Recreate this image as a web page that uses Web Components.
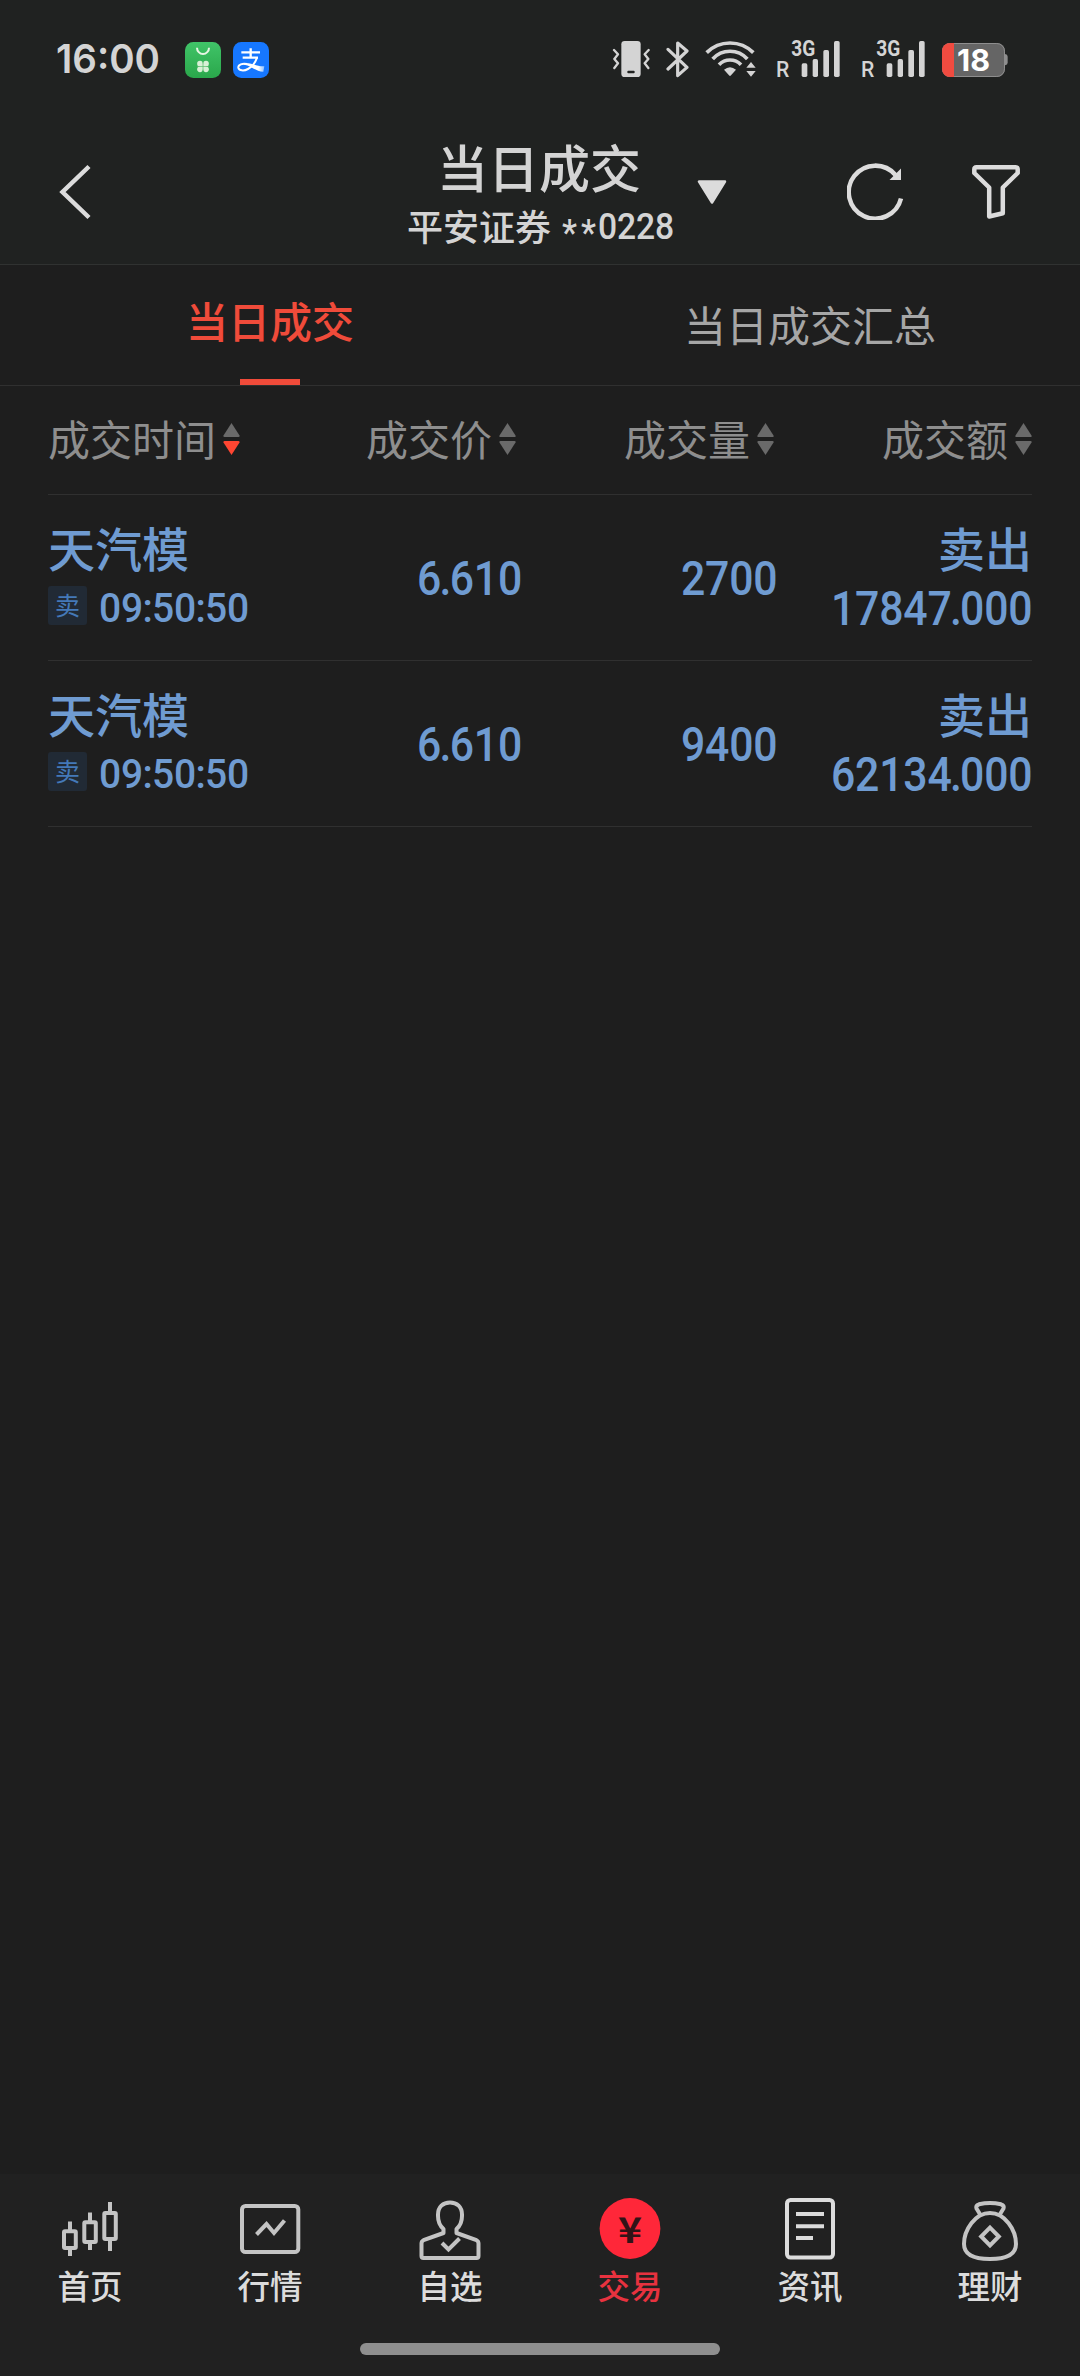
<!DOCTYPE html>
<html lang="zh-CN">
<head>
<meta charset="utf-8">
<title>当日成交</title>
<style>
  html, body { margin: 0; background: #1e1e1e; }
  body { font-family: "Noto Sans CJK SC", sans-serif; color: #d4d4d4; }
</style>
</head>
<body>
<trade-app></trade-app>
<script>
function define(name, html, setup) {
  const tpl = document.createElement('template');
  tpl.innerHTML = html;
  customElements.define(name, class extends HTMLElement {
    connectedCallback() {
      if (this.shadowRoot) return;
      const root = this.attachShadow({ mode: 'open' });
      root.appendChild(tpl.content.cloneNode(true));
      if (setup) setup(this, root);
    }
  });
}

/* Condensed numerals on a fixed pitch; the baseline is the bottom edge.
   pitch: advance of a digit, point: advance of "." and ":". */
define('num-text', `
  <style>
    :host { display: block; font-family: Roboto, sans-serif; font-weight: 500; }
    svg { display: block; overflow: visible; }
  </style>
  <svg><text fill="currentColor"></text></svg>`,
  (el, root) => {
    const value = el.getAttribute('value');
    if (value === null) return;
    const num = k => parseFloat(el.getAttribute(k));
    const size = num('size'), h = num('h'), pitch = num('pitch'), point = num('point');
    const scale = pitch / (0.564 * size);
    const natural = { '.': 0.274, ':': 0.258, '*': 0.443 };
    const xs = [], dys = [];
    let x = 0, lift = 0;
    for (const ch of value) {
      const adv = ch === '.' || ch === ':' ? point : pitch;
      const glyph = (natural[ch] || 0.564) * size * scale;
      xs.push(((x + (adv - glyph) / 2) / scale).toFixed(2));
      const want = ch === '*' ? 5.5 : 0;
      dys.push(want - lift); lift = want;
      x += adv;
    }
    const svg = root.querySelector('svg'), t = root.querySelector('text');
    svg.setAttribute('width', x.toFixed(1)); svg.setAttribute('height', h);
    t.setAttribute('transform', `translate(0 ${h}) scale(${scale.toFixed(4)} 1)`);
    t.setAttribute('x', xs.join(' '));
    t.setAttribute('dy', dys.join(' '));
    t.setAttribute('font-size', size);
    t.textContent = value;
  });

define('signal-icon', `
  <style>:host{display:block} svg{display:block;overflow:visible}</style>
  <svg width="65" height="39" viewBox="558 60 195 117" fill="#d4d4d4">
    <text x="558" y="171" font-family="Roboto" font-weight="500" font-size="64" textLength="40" lengthAdjust="spacingAndGlyphs">R</text>
    <text x="604" y="108" font-family="Roboto" font-weight="700" font-size="65" textLength="72" lengthAdjust="spacingAndGlyphs">3G</text>
    <rect x="635" y="130" width="17" height="41" rx="5"/><rect x="668" y="117" width="16" height="54" rx="5"/>
    <rect x="700" y="90" width="17" height="81" rx="5"/><rect x="732" y="63" width="17" height="108" rx="5"/>
  </svg>`);

define('status-bar', `
  <style>
    :host { display: block; height: 120px; }
    .bar { display: flex; height: 39px; padding: 40px 71px 0 56px; }
    .apps { display: flex; gap: 12px; padding: 2px 0 0 25px; flex: 1; }
    svg { display: block; }
    .clock { padding-top: 3px; overflow: visible; }
    .i2 { margin-left: 16px } .i3 { margin-left: 15px } .i4 { margin-left: 19px } .i5 { margin-left: 20px }
  </style>
  <div class="bar">
    <svg class="clock" width="104" height="30"><text y="29.500" font-family="Inter" font-weight="600" font-size="40" fill="#d4d4d4" textLength="104" lengthAdjust="spacingAndGlyphs">16:00</text></svg>
    <div class="apps">
      <svg width="36" height="36" viewBox="555 66 108 108">
        <defs><linearGradient id="g" x2="0" y2="1"><stop stop-color="#40c468"/><stop offset="1" stop-color="#2aa74b"/></linearGradient></defs>
        <rect x="555" y="66" width="108" height="108" rx="25" fill="url(#g)"/>
        <path d="M591 83a18 19 0 0 0 36 0" fill="none" stroke="#e6f6e4" stroke-width="6"/>
        <g fill="#d9f0d6"><circle cx="600" cy="131" r="8.5"/><circle cx="618" cy="131" r="8.5"/><circle cx="600" cy="148" r="8.5"/><circle cx="618" cy="148" r="8.5"/><rect x="600" y="131" width="18" height="17"/></g>
        <path d="M609 122v35M591 139.500h36" stroke="#53b868" stroke-width="2"/>
      </svg>
      <svg width="36" height="36" viewBox="699 66 108 108">
        <defs><linearGradient id="b"><stop offset=".7" stop-color="#fff"/><stop offset="1" stop-color="#8fc0ff"/></linearGradient></defs>
        <rect x="699" y="66" width="108" height="108" rx="25" fill="#1677ff"/>
        <g fill="none" stroke="#fff" stroke-width="7">
          <path d="M724 97h56M728 113h46M752 85v28"/>
          <path d="M771 113c-5 15-14 27-27 34c-13 7-27 5-29-4c-1-9 12-14 26-11" stroke-width="6"/>
        </g>
        <path d="M732 129c24-2 35 11 61 10l-3 16c-24 0-34-18-58-21z" fill="url(#b)"/>
      </svg>
    </div>
    <svg width="38" height="39" viewBox="66 60 114 117">
      <rect x="94" y="63" width="58" height="108" rx="10" fill="#d4d4d4"/><rect x="112" y="152" width="22" height="8" rx="3" fill="#202221"/>
      <path d="M72 90l12 13-11 14 11 13-11 14M176 90l-12 13 11 14-11 13 11 14" fill="none" stroke="#d4d4d4" stroke-width="7" stroke-linejoin="round" stroke-linecap="round"/>
    </svg>
    <svg class="i2" width="24" height="39" viewBox="228 60 72 117">
      <path d="M234 88L291 142L263 167V69L291 93L234 147" fill="none" stroke="#d4d4d4" stroke-width="9.500" stroke-linejoin="round" stroke-linecap="round"/>
    </svg>
    <svg class="i3" width="52" height="39" viewBox="345 60 156 117">
      <g fill="none" stroke="#d4d4d4" stroke-width="11"><path d="M350 98A99 99 0 0 1 490 98"/><path d="M368 117A70 70 0 0 1 472 117"/><path d="M387 134A46 46 0 0 1 453 134"/></g>
      <path d="M402 149Q420 134 438 149L423 166Q420 170 417 166ZM483 126L497 143H469ZM469 153H497L483 170Z" fill="#d4d4d4"/>
    </svg>
    <signal-icon class="i4"></signal-icon>
    <signal-icon class="i5"></signal-icon>
    <svg class="i3" width="68" height="39" viewBox="1053 60 204 117">
      <defs><clipPath id="c"><rect x="1056" y="69" width="189" height="102" rx="24"/></clipPath></defs>
      <rect x="1056" y="69" width="189" height="102" rx="24" fill="#656565"/>
      <rect x="1057.500" y="70.500" width="186" height="99" rx="23" fill="none" stroke="#8e8e8e" stroke-width="3"/>
      <rect x="1056" y="69" width="36" height="102" fill="#f04b40" clip-path="url(#c)"/>
      <path d="M1245 102q8 1 8 8v18q0 7-8 8z" fill="#8e8e8e"/>
      <text x="1101" y="154" font-family="Inter" font-weight="700" font-size="90" fill="#fff" textLength="99" lengthAdjust="spacingAndGlyphs">18</text>
    </svg>
  </div>`);

define('title-bar', `
  <style>
    :host { display: block; height: 144px; border-bottom: 1px solid #303231; }
    .bar { display: flex; }
    svg { display: block; }
    .back { margin: 42px 314px 0 57px; }
    .titles { width: 267px; padding-top: 16px; }
    .title { font-size: 51px; line-height: 60px; font-weight: 500; text-align: center; margin-right: 3px; white-space: nowrap; }
    .sub { display: flex; gap: 9px; font-size: 36px; line-height: 36px; margin-top: 11px; white-space: nowrap; }
    .sub num-text { padding-top: 6px; }
    .sub span { font-weight: 500; }
    .drop { margin: 60px 0 0 23px; }
    .refresh { margin: 40px 0 0 120px; }
    .filter { margin: 42px 0 0 64px; }
  </style>
  <div class="bar">
    <svg class="back" width="36" height="60" viewBox="57 162 36 60"><path d="M89 166.500L62.500 192L89 217.500" fill="none" stroke="#dcdcdc" stroke-width="4.500"/></svg>
    <div class="titles">
      <div class="title">当日成交</div>
      <div class="sub"><span>平安证券</span><num-text value="**0228" pitch="19" point="8" h="26" size="36.500"></num-text></div>
    </div>
    <svg class="drop" width="30" height="24"><path d="M2 1.500H28L15 22.500Z" fill="#dcdcdc" stroke="#dcdcdc" stroke-width="2.500" stroke-linejoin="round"/></svg>
    <svg class="refresh" width="60" height="60" viewBox="847 160 60 60">
      <path d="M901 198.500A26.500 26.500 0 1 1 895.500 175" fill="none" stroke="#dcdcdc" stroke-width="4.500"/>
      <path d="M901 168.500V180H889.500Z" fill="#dcdcdc"/>
    </svg>
    <svg class="filter" width="50" height="60" viewBox="971 162 50 60">
      <path d="M976.500 167.200H1015.500Q1017.700 167.200 1017.700 169.500V173L1002.800 187.500V213.300L989.200 216.500V187.500L974.300 173V169.500Q974.300 167.200 976.500 167.200Z" fill="none" stroke="#dcdcdc" stroke-width="4.500" stroke-linejoin="round"/>
    </svg>
  </div>`);

define('tab-bar', `
  <style>
    :host { display: flex; height: 120px; border-bottom: 1px solid #303030; font-size: 42px; text-align: center; }
    div { flex: 1; display: flex; flex-direction: column; align-items: center; color: #a6a6a6; line-height: 117px; }
    .on { color: #f04b3a; font-weight: 500; line-height: 110px; justify-content: space-between; }
    .on span { height: 110px; }
    i { width: 60px; height: 6px; background: #f04b3a; }
  </style>
  <div class="on"><span>当日成交</span><i></i></div>
  <div><span>当日成交汇总</span></div>`);

define('sort-label', `
  <style>
    :host { display: flex; align-items: center; justify-content: flex-end; gap: 7px; height: 107px; font-size: 42px; color: #8e8e8e; }
    :host([start]) { justify-content: flex-start; }
    span { line-height: 104px; padding-bottom: 3px; white-space: nowrap; }
    svg { display: block; padding-bottom: 1px; }
    .down { fill: #6a6a6a; } :host([desc]) .down { fill: #ff4632; }
  </style>
  <span><slot></slot></span>
  <svg width="17" height="32"><path d="M8.500 0L16.500 12.500Q17 14 15.500 14H1.500Q0 14 .5 12.500Z" fill="#6a6a6a"/><path class="down" d="M8.500 32L16.500 19.500Q17 18 15.500 18H1.500Q0 18 .5 19.500Z"/></svg>`);

define('list-header', `
  <style>
    :host { display: grid; grid-template-columns: 210px repeat(3, 258px); height: 108px; margin: 0 48px; border-bottom: 1px solid #303030; }
  </style>
  <sort-label start desc>成交时间</sort-label><sort-label>成交价</sort-label><sort-label>成交量</sort-label><sort-label>成交额</sort-label>`);

define('trade-row', `
  <style>
    :host { display: grid; grid-template-columns: 216px 258px 255px 255px; height: 165px; margin: 0 48px; border-bottom: 1px solid #303030; color: #6f9bd1; }
    .name { font-size: 47px; line-height: 56px; font-weight: 500; white-space: nowrap; }
    .end, .mid { display: flex; flex-direction: column; align-items: flex-end; }
    .cell { padding-top: 24px; }
    .mid { padding-top: 66px; }
    .meta { display: flex; gap: 12px; margin-top: 11px; }
    .badge { width: 39px; height: 39px; border-radius: 3px; background: #212a35; color: #4479b8; font-size: 25px; line-height: 36px; text-align: center; }
    .meta num-text { padding-top: 6px; }
    .end num-text { padding-top: 15px; }
  </style>
  <div class="cell"><div class="name" id="name"></div><div class="meta"><span class="badge">卖</span><num-text id="time" pitch="22" point="9" h="29.500" size="41"></num-text></div></div>
  <div class="mid"><num-text id="price" pitch="24.100" point="8.600" h="34" size="47.500"></num-text></div>
  <div class="mid"><num-text id="qty" pitch="24.100" point="8.600" h="34" size="47.500"></num-text></div>
  <div class="cell end"><div class="name">卖出</div><num-text id="sum" pitch="24.100" point="8.600" h="34.500" size="47.500"></num-text></div>`,
  (el, root) => {
    root.getElementById('name').textContent = el.getAttribute('name');
    for (const k of ['time', 'price', 'qty', 'sum']) {
      const old = root.getElementById(k), f = document.createElement('num-text');
      for (const a of old.attributes) f.setAttribute(a.name, a.value);
      f.setAttribute('value', el.getAttribute(k));
      old.replaceWith(f);
    }
  });

define('nav-item', `
  <style>
    :host { flex: 1; display: flex; flex-direction: column; align-items: center; gap: 3px; padding-top: 22px; }
    span { font-size: 32.500px; line-height: 36px; font-weight: 500; color: #dcdcdc; }
    :host([active]) span { color: #e8323f; }
  </style>
  <slot></slot><span></span>`,
  (el, root) => { root.querySelector('span').textContent = el.getAttribute('label'); });

define('bottom-nav', `
  <style>
    :host { display: flex; flex-direction: column; height: 202px; background: #212121; }
    nav { display: flex; height: 169px; }
    svg { display: block; fill: none; stroke: #c4c4c4; stroke-width: 4; }
    .home { width: 360px; height: 12px; border-radius: 6px; background: #8f8f8f; align-self: center; }
  </style>
  <nav>
    <nav-item label="首页"><svg width="68" height="68"><rect x="8" y="35.300" width="11.800" height="16.700" rx="1"/><rect x="28.300" y="26.300" width="11.500" height="19.700" rx="1"/><rect x="48.300" y="17" width="11.500" height="26" rx="1"/><path d="M14 25.500V34M14 53V60M34 16.500V25M34 47V54M54 6V16M54 44V55"/></svg></nav-item>
    <nav-item label="行情"><svg width="68" height="68"><rect x="6" y="10" width="56.300" height="46" rx="3.500"/><path d="M20.500 38.500L30.500 28L38 37L48.500 24.500"/></svg></nav-item>
    <nav-item label="自选"><svg width="68" height="68"><path stroke-linejoin="round" d="M27.500 37V33C23.500 29.500 22 25.500 22 20V18.500C22 11 27 6.500 34 6.500S46 11 46 18.500V20C46 25.500 44.500 29.500 40.500 33V37L60.500 44.200Q62.500 45.200 62.500 47.500V60Q62.500 62 60.500 62H7.500Q5.500 62 5.500 60V47.500Q5.500 45.200 7.500 44.200L27.500 37Z"/><path d="M26 47L32.500 53.500L43.500 42.500"/></svg></nav-item>
    <nav-item label="交易" active><svg width="68" height="68"><circle cx="34" cy="32.500" r="30.400" fill="#ff2739" stroke="none"/><text x="22" y="46.500" font-family="Noto Sans CJK SC" font-weight="700" font-size="35" textLength="24" lengthAdjust="spacingAndGlyphs" fill="#321317" stroke="none">¥</text></svg></nav-item>
    <nav-item label="资讯"><svg width="68" height="68" style="stroke:#dcdcdc"><rect x="11" y="4" width="46" height="57.500" rx="3.500"/><path d="M20 18H48M20 30.300H48M20 42H37"/></svg></nav-item>
    <nav-item label="理财"><svg width="68" height="68"><path d="M34 17C19 17 8 34 8 48C8 59 18 63 34 63S60 59 60 48C60 34 49 17 34 17Z"/><path stroke-linejoin="round" d="M24.500 19L20.500 12.500Q19.500 9.500 23 8.300Q34 5.700 45 8.300Q48.500 9.500 47.500 12.500L43.500 19"/><path d="M34 31.700L42.800 40.500L34 49.300L25.200 40.500Z"/></svg></nav-item>
  </nav>
  <div class="home"></div>`);

define('trade-app', `
  <style>
    :host { display: flex; flex-direction: column; width: 1080px; height: 2376px; background: #1e1e1e; }
    header { background: #202221; }
    main { flex: 1; }
  </style>
  <header><status-bar></status-bar><title-bar></title-bar></header>
  <tab-bar></tab-bar>
  <main>
    <list-header></list-header>
    <trade-row name="天汽模" time="09:50:50" price="6.610" qty="2700" sum="17847.000"></trade-row>
    <trade-row name="天汽模" time="09:50:50" price="6.610" qty="9400" sum="62134.000"></trade-row>
  </main>
  <bottom-nav></bottom-nav>`);
</script>
</body>
</html>
